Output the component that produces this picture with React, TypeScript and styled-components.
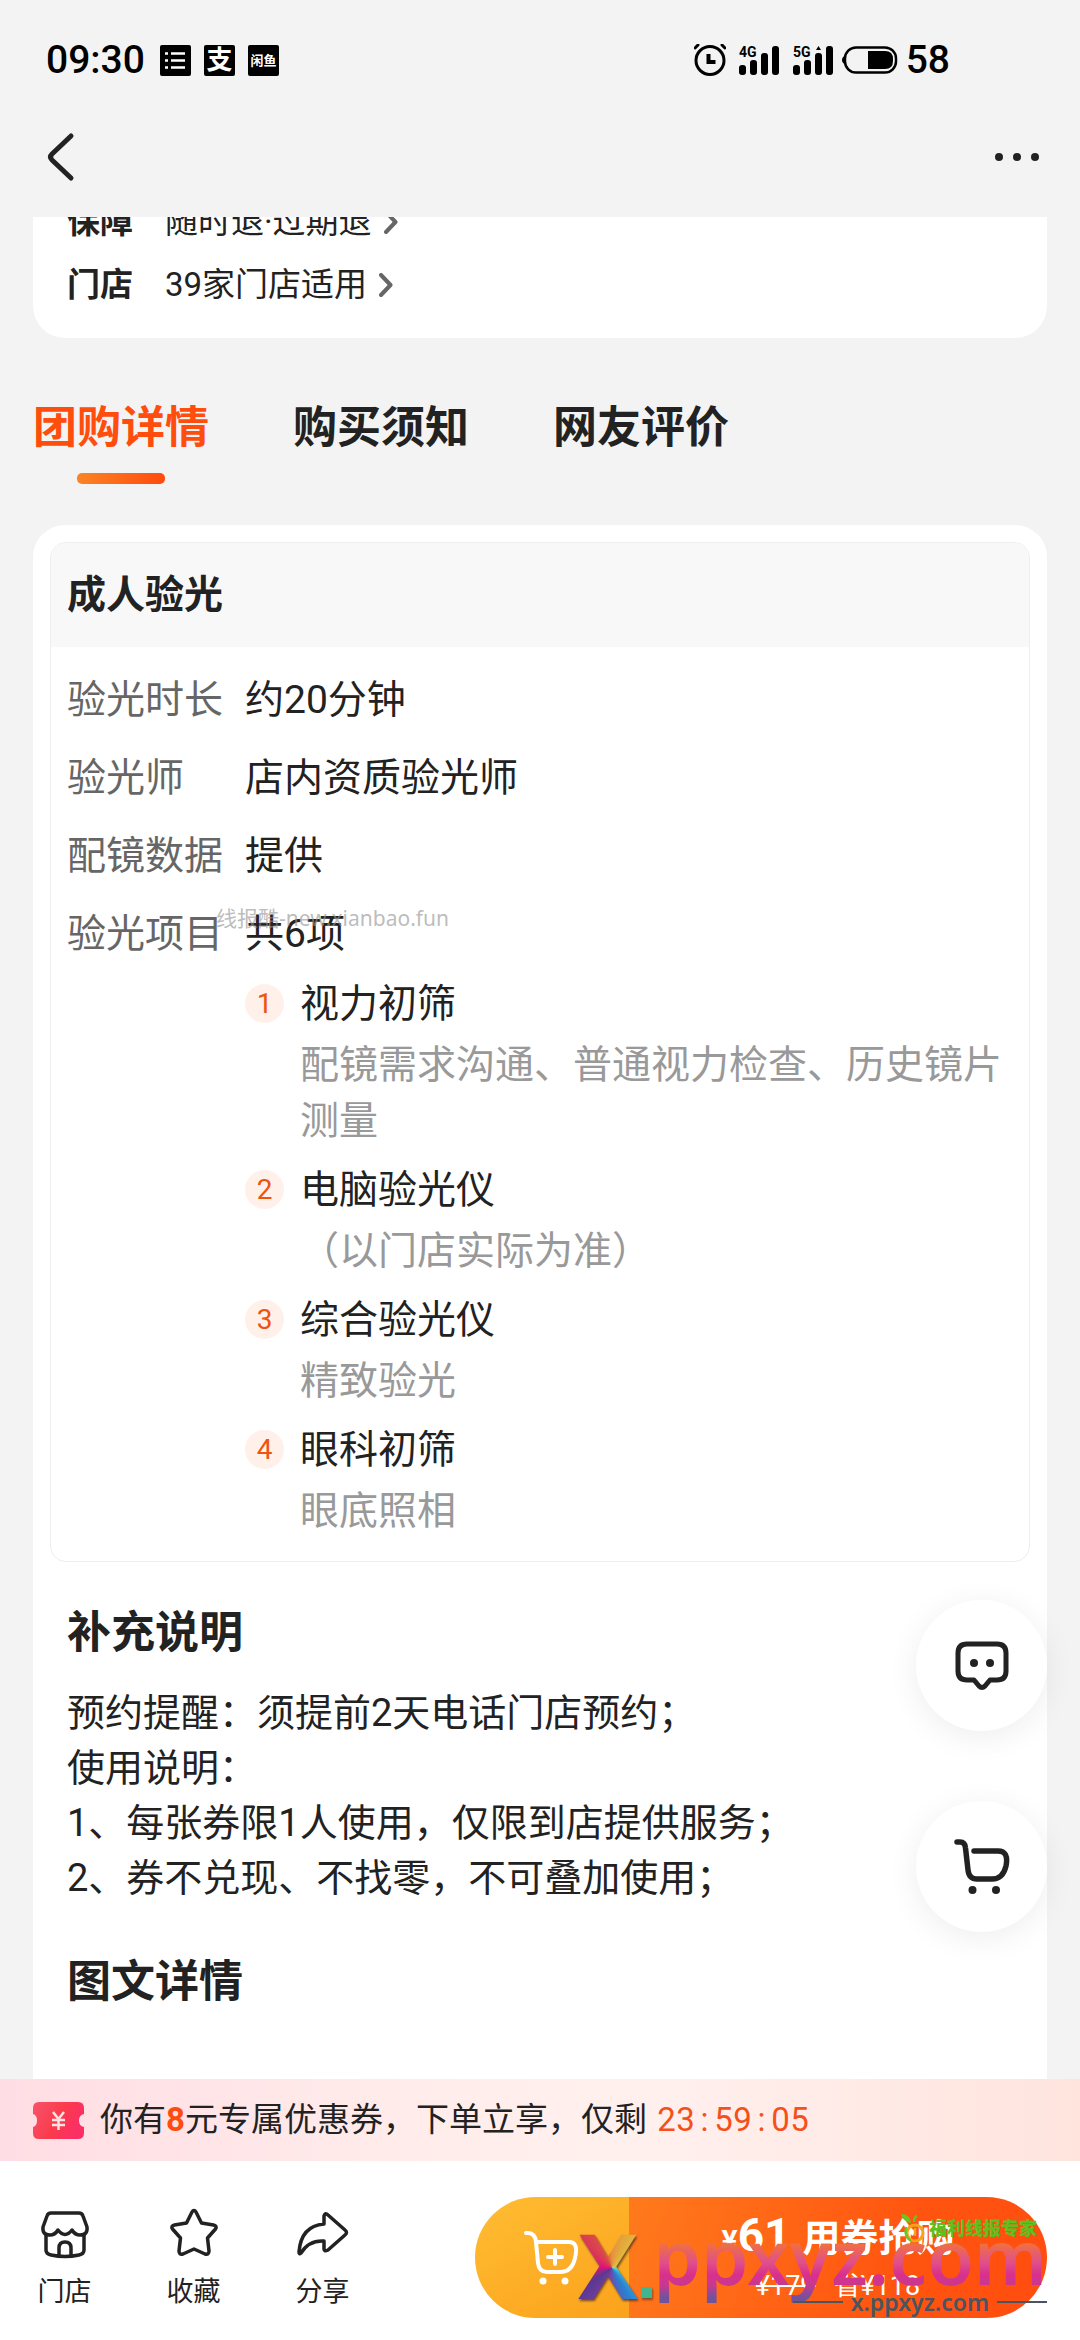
import React from "react";
import styled, { createGlobalStyle } from "styled-components";

const GlobalStyle = createGlobalStyle`
  *, *::before, *::after { box-sizing: border-box; }
  html, body { margin: 0; padding: 0; }
  body {
    background: #f3f3f3;
    color: #222;
    font-family: Roboto, "Noto Sans CJK SC", sans-serif;
  }
  button {
    margin: 0;
    padding: 0;
    border: 0;
    background: none;
    color: inherit;
    font: inherit;
    cursor: pointer;
  }
  h2, h3, p, dl, dd, ol { margin: 0; padding: 0; }
  svg { display: block; flex: none; }
`;

const Screen = styled.div`
  display: flex;
  flex-direction: column;
  height: 100vh;
  overflow: hidden;
  background: #f3f3f3;
`;

const StatusBar = styled.div`
  display: flex;
  align-items: center;
  justify-content: space-between;
  flex: none;
  height: 120px;
  padding: 0 130px 0 46px;
  color: #000;
  font-size: 39px;
  font-weight: 500;
  line-height: 48px;
`;

const StatusGroup = styled.div<{ $gap: number }>`
  display: flex;
  align-items: center;
  gap: ${(p) => p.$gap}px;
`;

const Clock = styled.span`
  margin-right: 2px;
`;

const AppBadge = styled.span<{ $size: number }>`
  display: flex;
  align-items: center;
  justify-content: center;
  width: 31px;
  height: 31px;
  border-radius: 2px;
  background: #000;
  color: #fff;
  font-size: ${(p) => p.$size}px;
  font-weight: 700;
  line-height: 31px;
  white-space: nowrap;
`;

const TitleBar = styled.header`
  display: flex;
  align-items: center;
  justify-content: space-between;
  flex: none;
  height: 97px;
  padding: 0 36px 23px 44px;
`;

const IconButton = styled.button`
  display: flex;
  align-items: center;
  justify-content: center;
  height: 56px;
`;

const Content = styled.main`
  display: flex;
  flex-direction: column;
  flex: 1;
  min-height: 0;
  overflow-y: auto;
  scrollbar-width: none;
  padding: 0 33px;
`;

const InfoCard = styled.section`
  display: flex;
  flex-direction: column;
  flex: none;
  gap: 17px;
  margin-top: -42px;
  padding: 24px 34px 30px;
  border-radius: 32px;
  background: #fff;
`;

const InfoRow = styled.div`
  display: flex;
  align-items: center;
  gap: 32px;
  font-size: 33px;
  line-height: 46px;
`;

const InfoLabel = styled.span`
  font-weight: 700;
`;

const InfoLink = styled.button`
  display: flex;
  align-items: center;
  gap: 12px;
  line-height: 46px;
`;

const Tabs = styled.nav`
  display: flex;
  flex: none;
  gap: 84px;
  padding: 60px 0 41px;
`;

const Tab = styled.button<{ $active?: boolean }>`
  display: flex;
  flex-direction: column;
  align-items: center;
  gap: 15px;
  color: ${(p) => (p.$active ? "#ff4d0d" : "#222")};
  font-size: 44px;
  font-weight: 700;
  line-height: 60px;
  white-space: nowrap;

  &::after {
    content: "";
    width: 88px;
    height: 11px;
    border-radius: 5px;
    background: ${(p) => (p.$active ? "linear-gradient(100deg, #fb8425, #ff4b0d)" : "none")};
  }
`;

const DetailCard = styled.section`
  flex: 1 0 auto;
  padding: 17px 17px 66px;
  border-radius: 32px 32px 0 0;
  background: #fff;
`;

const Panel = styled.section`
  overflow: hidden;
  border: 1px solid #eee;
  border-radius: 16px;
`;

const PanelTitle = styled.h3`
  padding: 24px 16px;
  background: #f8f8f8;
  font-size: 39px;
  font-weight: 700;
  line-height: 56px;
`;

const PanelBody = styled.div`
  padding: 25px 16px 22px;
`;

const Facts = styled.dl`
  display: grid;
  grid-template-columns: 178px 1fr;
  row-gap: 22px;
  font-size: 39px;
  line-height: 56px;
`;

const FactName = styled.dt`
  position: relative;
  color: #666;
`;

const FactValue = styled.dd``;

const Steps = styled.ol`
  display: flex;
  flex-direction: column;
  gap: 13px;
  margin: 14px 0 0 178px;
  list-style: none;
  font-size: 39px;
  line-height: 56px;
`;

const Step = styled.li`
  display: flex;
  gap: 16px;
`;

const StepNumber = styled.span`
  flex: none;
  width: 39px;
  height: 39px;
  margin-top: 8px;
  border-radius: 50%;
  background: #fff0ea;
  color: #ee5310;
  font-size: 28px;
  line-height: 39px;
  text-align: center;
`;

const StepText = styled.div`
  display: flex;
  flex-direction: column;
  gap: 5px;
`;

const StepNote = styled.p`
  color: #999;
`;

const Notes = styled.section`
  padding: 41px 17px 0;
`;

const NotesTitle = styled.h2`
  font-size: 44px;
  font-weight: 700;
  line-height: 60px;
`;

const NotesText = styled.p`
  margin: 23px 0 5px;
  font-size: 38px;
  line-height: 55px;
`;

const FloatingActions = styled.div`
  position: fixed;
  right: 33px;
  bottom: 408px;
  display: flex;
  flex-direction: column;
  gap: 70px;
`;

const FloatingButton = styled.button`
  display: flex;
  align-items: center;
  justify-content: center;
  width: 131px;
  height: 131px;
  border-radius: 50%;
  background: #fff;
  box-shadow: 0 6px 32px rgba(0, 0, 0, 0.07);
`;

const CouponBar = styled.div`
  position: relative;
  display: flex;
  align-items: center;
  flex: none;
  gap: 16px;
  height: 82px;
  padding: 0 33px;
  background: linear-gradient(90deg, #ffdde4, #ffedeb 40%, #fff0ee 60%, #ffe4de);
  font-size: 33px;
  line-height: 46px;

  &::after {
    content: "";
    position: absolute;
    top: 100%;
    right: 171px;
    border: 13px solid transparent;
    border-top-color: #ffe4de;
    border-bottom: 0;
  }
`;

const CouponText = styled.p`
  white-space: nowrap;
`;

const Amount = styled.b`
  color: #ff4b0d;
`;

const Countdown = styled.time`
  display: inline-flex;
  margin-left: 10px;
  color: #f4511a;
`;

const CountdownCell = styled.span`
  width: 19px;
  text-align: center;
`;

const BottomBar = styled.footer`
  position: relative;
  display: flex;
  align-items: flex-start;
  flex: none;
  height: 179px;
  padding: 36px 33px 0 0;
  background: #fff;
`;

const NavButton = styled.button`
  display: flex;
  flex-direction: column;
  align-items: center;
  flex: none;
  gap: 15px;
  width: 129px;
  padding-top: 10px;
  font-size: 27px;
  line-height: 36px;
`;

const BuyGroup = styled.div`
  display: flex;
  flex: 1;
  height: 121px;
  margin-left: 88px;
  overflow: hidden;
  border-radius: 61px;
`;

const AddToCart = styled.button`
  display: flex;
  align-items: center;
  justify-content: center;
  flex: none;
  width: 154px;
  background: linear-gradient(150deg, #ffbd33, #fba21b);
`;

const BuyNow = styled.button`
  display: flex;
  flex-direction: column;
  align-items: center;
  flex: 1;
  padding-top: 12px;
  background: linear-gradient(110deg, #ff7a1c, #ff5410 65%, #ff4d0f);
  color: #fff;
`;

const BuyTitle = styled.span`
  display: flex;
  align-items: baseline;
  font-size: 38px;
  font-weight: 700;
  line-height: 52px;
`;

const Price = styled.span`
  margin-right: 12px;
  font-size: 46px;
`;

const Currency = styled.span`
  font-size: 30px;
`;

const BuyNote = styled.span`
  display: flex;
  gap: 18px;
  font-size: 27px;
  line-height: 38px;
`;

const PageMark = styled.span`
  position: absolute;
  top: 0;
  left: 149px;
  color: rgba(150, 150, 150, 0.65);
  font-family: "Noto Sans", "Noto Sans CJK SC", sans-serif;
  font-size: 21px;
  line-height: 24px;
  white-space: nowrap;
`;

const MarkLayer = styled.div`
  position: absolute;
  right: 33px;
  bottom: 0;
  width: 472px;
  height: 140px;
  font-family: "Noto Sans", "Noto Sans CJK SC", sans-serif;
  font-weight: 700;
  white-space: nowrap;
  pointer-events: none;
`;

const BigX = styled.span`
  position: absolute;
  left: 3px;
  bottom: 16px;
  background: conic-gradient(from 0deg at 34px 64px, #e8903c, #e0b83c 40deg, #b8d060 75deg, #3fc8d8 110deg, #2b7fd0 150deg, #7a3fa8 190deg, #5a3890 235deg, #e0107a 275deg, #d84a48 330deg, #e8903c);
  background-clip: text;
  color: transparent;
  filter: drop-shadow(1px 2px 1px rgba(60, 30, 40, 0.7));
  font-size: 90px;
  line-height: 120px;
`;

const BigDot = styled.span`
  position: absolute;
  left: 66px;
  bottom: 42px;
  width: 11px;
  height: 11px;
  background: #3fb592;
  box-shadow: 1px 2px 2px rgba(60, 50, 40, 0.6);
`;

const BigDomain = styled.span`
  position: absolute;
  right: 0;
  bottom: 32px;
  background: linear-gradient(180deg, #f0703f 38%, #e0508a 56%, #d8308c 68%, #c83890 78%, #71529c 90%);
  background-clip: text;
  color: transparent;
  font-size: 76px;
  font-weight: 600;
  line-height: 104px;
`;

const SmallDomain = styled.span`
  position: absolute;
  right: 0;
  bottom: 24px;
  display: flex;
  align-items: center;
  gap: 8px;
  color: #4a5560;
  font-size: 23px;
  font-weight: 600;
  line-height: 28px;

  &::before,
  &::after {
    content: "";
    width: 50px;
    height: 2px;
    background: #4a5560;
  }
`;

const GreenMark = styled.span`
  position: absolute;
  right: 10px;
  bottom: 97px;
  display: flex;
  align-items: center;
  gap: 4px;
  color: #5fbf1f;
  font-size: 18px;
  font-weight: 900;
  line-height: 28px;
`;

const ChevronRight = () => (
  <svg width="14" height="24" viewBox="0 0 14 24" fill="none" stroke="#666" strokeWidth="4" strokeLinecap="round" strokeLinejoin="round">
    <path d="M2 2l9.500 10L2 22" />
  </svg>
);

const AlarmIcon = () => (
  <svg width="32" height="32" viewBox="0 0 32 32" fill="none" stroke="#000" strokeWidth="3" strokeLinecap="round">
    <circle cx="16" cy="16.500" r="14" />
    <path d="M14.500 10v8h7" strokeWidth="4" strokeLinecap="butt" />
    <path d="M1 4l3-3M31 4l-3-3" />
  </svg>
);

const SignalIcon = ({ label }: { label: string }) => (
  <svg width="41" height="31" viewBox="0 0 41 31" fill="#000">
    <text x="0" y="12" fontSize="14" fontWeight="700" fontFamily="Roboto, sans-serif">{label}</text>
    <rect x="0" y="20" width="7" height="10" rx="3" />
    <rect x="11" y="15" width="7" height="15" rx="3" />
    <rect x="22" y="8" width="7" height="22" rx="3" />
    <rect x="33" y="1" width="7" height="29" rx="3" />
    {label === "5G" && <path d="M23 5l2.500-4L28 5z" />}
  </svg>
);

const BatteryIcon = () => (
  <svg width="56" height="28" viewBox="0 0 56 28">
    <path d="M3 9.500C-1 12-1 16 3 18.500z" />
    <rect x="3" y="1.500" width="51" height="25" rx="11" fill="none" stroke="#000" strokeWidth="2.500" />
    <path d="M26 5h17q8 0 8 8v2q0 8-8 8H26z" />
  </svg>
);

const TicketIcon = () => (
  <svg width="51" height="37" viewBox="0 0 51 37">
    <defs>
      <linearGradient id="ticket" x1="0" y1="0" x2="1" y2="0.400">
        <stop offset="0" stopColor="#f7546a" />
        <stop offset="0.600" stopColor="#fb3a4c" />
        <stop offset="1" stopColor="#fb2f66" />
      </linearGradient>
    </defs>
    <path fill="url(#ticket)" d="M6 0h39q6 0 6 6v6q-5 1-5 6.500t5 6.500v6q0 6-6 6H6q-6 0-6-6v-6q4-1 4-6.500T0 12V6q0-6 6-6z" />
    <path d="M20 10l5.500 7 5.500-7M25.500 17v11M19 18h13M19 23h13" fill="none" stroke="#ffe3e3" strokeWidth="2.500" />
  </svg>
);

const StoreIcon = () => (
  <svg width="52" height="52" viewBox="0 0 52 52" fill="none" stroke="#222" strokeWidth="3.500" strokeLinejoin="round" strokeLinecap="round">
    <path d="M12 6h28q3 0 4 3l4 11q1 8-7 8-5 0-8-5-7 9-14 0-3 5-8 5-8 0-7-8L8 9q1-3 4-3z" />
    <path d="M7 28v15q0 4 5 5 14 3 28 0 5-1 5-5V28" />
    <path d="M20 48v-7q0-6 6-6t6 6v7" />
  </svg>
);

const StarIcon = () => (
  <svg width="52" height="52" viewBox="0 0 52 52" fill="none" stroke="#222" strokeWidth="3.500" strokeLinejoin="round">
    <path d="M23.500 6q2.500-5 5 0l5 10 12 2q4 1 2 4L39.500 31l1.500 13q0 4-4 3L26 42l-11 5q-4 1-4-3l1.500-13L4.500 22q-2-3 2-4l12-2z" />
  </svg>
);

const ShareIcon = () => (
  <svg width="52" height="52" viewBox="0 0 52 52" fill="none" stroke="#222" strokeWidth="3.500" strokeLinejoin="round">
    <path d="M27 17V9q1-4 4-1l17 15q3 2.500 0 5L31 43q-4 2-4-1v-8Q12 33 4 46q-2 2-2-1Q4 19 27 17z" />
  </svg>
);

const ChatIcon = () => (
  <svg width="54" height="50" viewBox="0 0 54 50" fill="none" stroke="#222" strokeWidth="5" strokeLinejoin="round">
    <path d="M12 3h30q9 0 9 9v18q0 9-9 9h-7l-5 6q-3 3-6 0l-5-6h-7q-9 0-9-9V12q0-9 9-9z" />
    <circle cx="19" cy="22" r="4" fill="#222" stroke="none" />
    <circle cx="35" cy="22" r="4" fill="#222" stroke="none" />
  </svg>
);

const CartIcon = () => (
  <svg width="56" height="58" viewBox="0 0 56 58" fill="none" stroke="#222" strokeWidth="5.500" strokeLinecap="round" strokeLinejoin="round">
    <path d="M3 4h3q5 0 5.500 6L14 32q1 9 9 9h15q11 0 14-13 3-15-8-15H20" />
    <circle cx="18.500" cy="52" r="4" fill="#222" stroke="none" />
    <circle cx="42" cy="52" r="4" fill="#222" stroke="none" />
  </svg>
);

const AddCartIcon = () => (
  <svg width="56" height="56" viewBox="0 0 56 56" fill="none" stroke="#fff" strokeWidth="4" strokeLinecap="round" strokeLinejoin="round">
    <path d="M2 3q9-1 10 9l2 21q1 9 9 9h13q12 0 15-14 4-16-6-16H12" />
    <path d="M31 20v14M24 27h14" />
    <circle cx="19" cy="51" r="3.500" fill="#fff" stroke="none" />
    <circle cx="41" cy="51" r="3.500" fill="#fff" stroke="none" />
  </svg>
);

const FruitIcon = () => (
  <svg width="24" height="30" viewBox="0 0 24 30" fill="none">
    <circle cx="14" cy="20" r="8" stroke="#f5a31a" strokeWidth="3" />
    <path d="M14 15v8" stroke="#f5a31a" strokeWidth="2.500" />
    <path d="M0 1q9 0 10 9Q2 9 0 1z" fill="#6cc424" />
    <path d="M13 9q0-5 3-6M5 14q-2 10 5 14" stroke="#6cc424" strokeWidth="2.500" />
  </svg>
);

const facts = [
  ["验光时长", "约20分钟"],
  ["验光师", "店内资质验光师"],
  ["配镜数据", "提供"],
  ["验光项目", "共6项"],
];

const steps = [
  ["视力初筛", "配镜需求沟通、普通视力检查、历史镜片测量"],
  ["电脑验光仪", "（以门店实际为准）"],
  ["综合验光仪", "精致验光"],
  ["眼科初筛", "眼底照相"],
];

const tabs = ["团购详情", "购买须知", "网友评价"];

export default function App() {
  return (
    <Screen lang="zh-CN">
      <GlobalStyle />
      <StatusBar>
        <StatusGroup $gap={13}>
          <Clock>09:30</Clock>
          <AppBadge $size={20}>
            <svg width="31" height="31" viewBox="0 0 31 31" stroke="#fff" strokeWidth="2.500">
              <path d="M5 8.500h3M11 8.500h14M5 15.500h3M11 15.500h14M5 22.500h3M11 22.500h14" />
            </svg>
          </AppBadge>
          <AppBadge $size={26}>支</AppBadge>
          <AppBadge $size={13}>闲鱼</AppBadge>
        </StatusGroup>
        <StatusGroup $gap={8}>
          <StatusGroup $gap={13}>
            <AlarmIcon />
            <SignalIcon label="4G" />
            <SignalIcon label="5G" />
          </StatusGroup>
          <BatteryIcon />
          <span>58</span>
        </StatusGroup>
      </StatusBar>

      <TitleBar>
        <IconButton aria-label="返回">
          <svg width="34" height="50" viewBox="0 0 34 50" fill="none" stroke="#222" strokeWidth="5" strokeLinecap="round" strokeLinejoin="round">
            <path d="M27 4L8 22q-3 3 0 6l19 18" />
          </svg>
        </IconButton>
        <IconButton aria-label="更多">
          <svg width="50" height="10" viewBox="0 0 50 10" fill="#222">
            <circle cx="5" cy="5" r="4" />
            <circle cx="23" cy="5" r="4" />
            <circle cx="41" cy="5" r="4" />
          </svg>
        </IconButton>
      </TitleBar>

      <Content>
        <InfoCard>
          <InfoRow>
            <InfoLabel>保障</InfoLabel>
            <InfoLink>随时退·过期退<ChevronRight /></InfoLink>
          </InfoRow>
          <InfoRow>
            <InfoLabel>门店</InfoLabel>
            <InfoLink>39家门店适用<ChevronRight /></InfoLink>
          </InfoRow>
        </InfoCard>

        <Tabs>
          {tabs.map((name, i) => (
            <Tab key={name} $active={i === 0}>{name}</Tab>
          ))}
        </Tabs>

        <DetailCard>
          <Panel>
            <PanelTitle>成人验光</PanelTitle>
            <PanelBody>
              <Facts>
                {facts.map(([name, value], i) => (
                  <React.Fragment key={name}>
                    <FactName>
                      {name}
                      {i === 3 && <PageMark>线报酷-new.xianbao.fun</PageMark>}
                    </FactName>
                    <FactValue>{value}</FactValue>
                  </React.Fragment>
                ))}
              </Facts>
              <Steps>
                {steps.map(([title, note], i) => (
                  <Step key={title}>
                    <StepNumber>{i + 1}</StepNumber>
                    <StepText>
                      <span>{title}</span>
                      <StepNote>{note}</StepNote>
                    </StepText>
                  </Step>
                ))}
              </Steps>
            </PanelBody>
          </Panel>

          <Notes>
            <NotesTitle>补充说明</NotesTitle>
            <NotesText>
              预约提醒：须提前2天电话门店预约；<br />
              使用说明：<br />
              1、每张券限1人使用，仅限到店提供服务；<br />
              2、券不兑现、不找零，不可叠加使用；
            </NotesText>
          </Notes>
          <Notes>
            <NotesTitle>图文详情</NotesTitle>
          </Notes>
        </DetailCard>
      </Content>

      <FloatingActions>
        <FloatingButton aria-label="客服"><ChatIcon /></FloatingButton>
        <FloatingButton aria-label="购物车"><CartIcon /></FloatingButton>
      </FloatingActions>

      <CouponBar>
        <TicketIcon />
        <CouponText>
          你有<Amount>8</Amount>元专属优惠券，下单立享，仅剩
          <Countdown>
            {"23:59:05".split("").map((c, i) => (
              <CountdownCell key={i}>{c}</CountdownCell>
            ))}
          </Countdown>
        </CouponText>
      </CouponBar>

      <BottomBar>
        <NavButton><StoreIcon />门店</NavButton>
        <NavButton><StarIcon />收藏</NavButton>
        <NavButton><ShareIcon />分享</NavButton>
        <BuyGroup>
          <AddToCart aria-label="加入购物车"><AddCartIcon /></AddToCart>
          <BuyNow>
            <BuyTitle>
              <Price><Currency>¥</Currency>61</Price>用券抢购
            </BuyTitle>
            <BuyNote><s>¥179</s><span>省¥118</span></BuyNote>
          </BuyNow>
        </BuyGroup>
        <MarkLayer>
          <BigX>X</BigX>
          <BigDot />
          <BigDomain>ppxyz.com</BigDomain>
          <SmallDomain>x.ppxyz.com</SmallDomain>
          <GreenMark><FruitIcon />福利线报专家</GreenMark>
        </MarkLayer>
      </BottomBar>
    </Screen>
  );
}
